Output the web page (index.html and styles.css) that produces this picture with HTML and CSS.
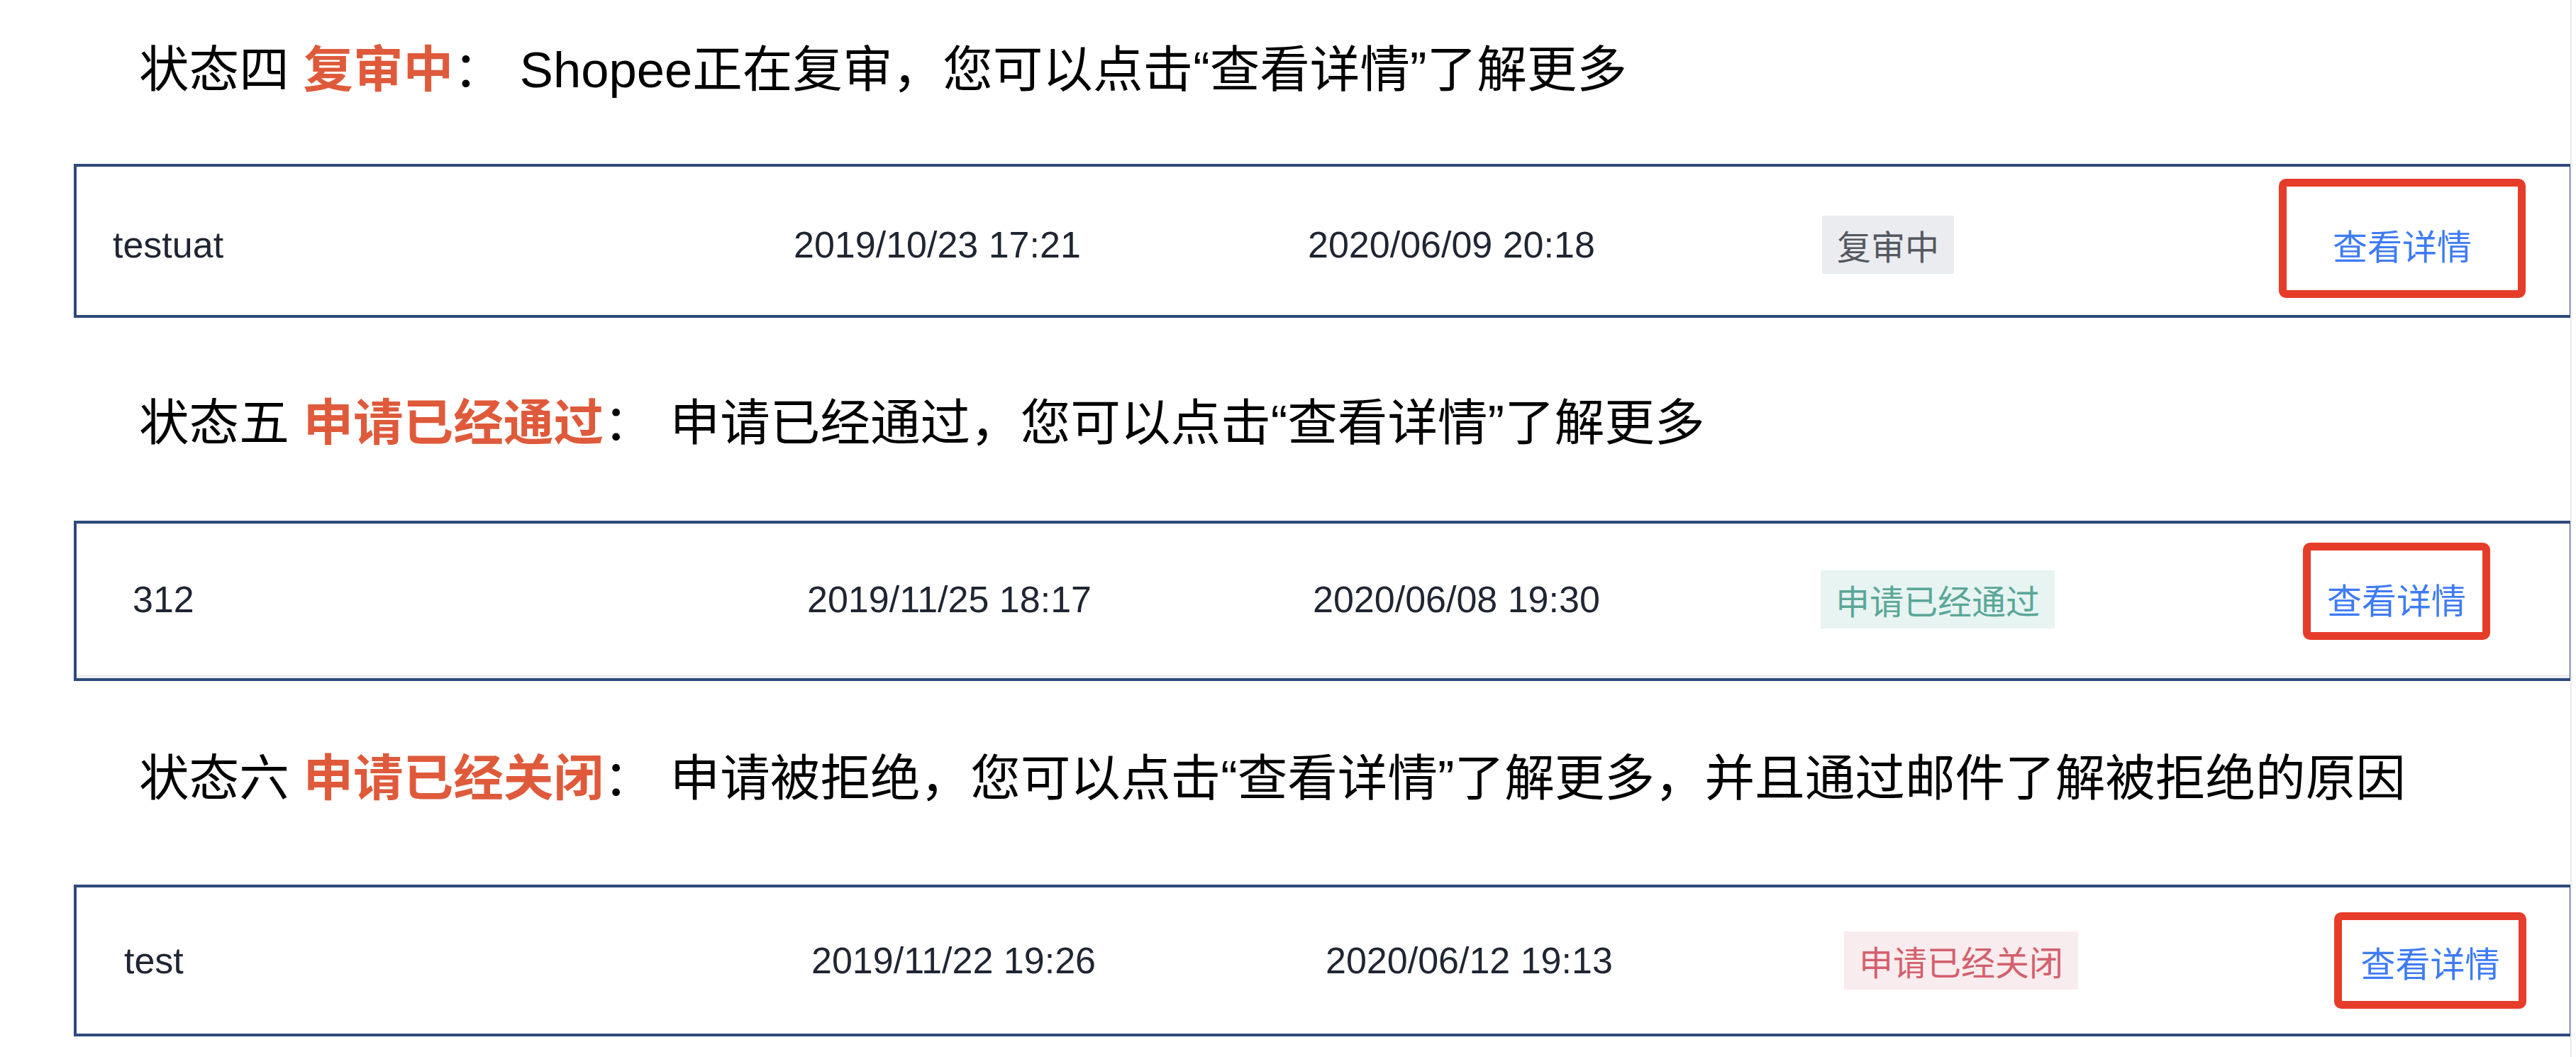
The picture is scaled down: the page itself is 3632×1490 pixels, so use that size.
FILE: index.html
```html
<!DOCTYPE html>
<html lang="zh-CN">
<head>
<meta charset="utf-8">
<title>申请状态说明</title>
<link rel="stylesheet" href="styles.css">
</head>
<body>
<div class="page">
  <section class="sec sec-review">
    <h2 class="heading"><span class="label">状态四</span> <strong class="state">复审中</strong><span class="colon">：</span><span class="desc">Shopee正在复审，您可以点击“查看详情”了解更多</span></h2>
    <div class="card card-review">
      <div class="row">
        <span class="cell name">testuat</span>
        <span class="cell date">2019/10/23 17:21</span>
        <span class="cell date">2020/06/09 20:18</span>
        <span class="cell"><span class="tag tag-info">复审中</span></span>
        <span class="cell"><a class="detail" href="#">查看详情</a></span>
      </div>
    </div>
  </section>

  <section class="sec sec-passed">
    <h2 class="heading"><span class="label">状态五</span> <strong class="state">申请已经通过</strong><span class="colon">：</span><span class="desc">申请已经通过，您可以点击“查看详情”了解更多</span></h2>
    <div class="card card-passed">
      <div class="row">
        <span class="cell name">312</span>
        <span class="cell date">2019/11/25 18:17</span>
        <span class="cell date">2020/06/08 19:30</span>
        <span class="cell"><span class="tag tag-success">申请已经通过</span></span>
        <span class="cell"><a class="detail" href="#">查看详情</a></span>
      </div>
    </div>
  </section>

  <section class="sec sec-closed">
    <h2 class="heading"><span class="label">状态六</span> <strong class="state">申请已经关闭</strong><span class="colon">：</span><span class="desc">申请被拒绝，您可以点击“查看详情”了解更多，并且通过邮件了解被拒绝的原因</span></h2>
    <div class="card card-closed">
      <div class="row">
        <span class="cell name">test</span>
        <span class="cell date">2019/11/22 19:26</span>
        <span class="cell date">2020/06/12 19:13</span>
        <span class="cell"><span class="tag tag-danger">申请已经关闭</span></span>
        <span class="cell"><a class="detail" href="#">查看详情</a></span>
      </div>
    </div>
  </section>
</div>
</body>
</html>
```

FILE: styles.css
```css
html, body {
  margin: 0;
  padding: 0;
  background: #ffffff;
}

body {
  font-family: "Liberation Sans", "Noto Sans CJK SC", sans-serif;
  color: #000000;
}

.page {
  box-sizing: border-box;
  width: 3626px;
  height: 1490px;
  padding-left: 104px;
  border-right: 2px solid #e9e9e9;
  overflow: hidden;
}

.sec {
  display: flex;
  flex-direction: column;
}

.heading {
  margin: 0 0 0 92px;
  height: 100px;
  font-size: 70.6px;
  line-height: 100px;
  font-weight: 400;
  white-space: nowrap;
  color: #000000;
}

.state {
  font-weight: 700;
  color: #df5a3b;
}

.desc {
  margin-left: 23px;
}

.sec-review .heading { margin-top: 49px; }
.sec-review .card { margin-top: 82px; height: 217px; }

.sec-passed .heading { margin-top: 99px; }
.sec-passed .card { margin-top: 87px; height: 226px; }

.sec-closed .heading { margin-top: 88px; }
.sec-closed .card { margin-top: 99px; height: 214px; }

.card {
  box-sizing: border-box;
  width: 3523px;
  border: 4px solid #2e4a7b;
  background: #ffffff;
}

.row {
  box-sizing: border-box;
  height: 100%;
  display: grid;
  align-items: center;
  font-size: 52px;
  color: #1f2532;
}

.card-review .row {
  padding-left: 51px;
  padding-top: 10px;
  grid-template-columns: 960px 725px 725px 644px auto;
}

.card-passed .row {
  padding-left: 79px;
  grid-template-columns: 951px 713px 716px 680px auto;
  border-top: 1px solid #dfe3ea;
  border-bottom: 5px solid #efefef;
}

.card-closed .row {
  padding-left: 67px;
  grid-template-columns: 969px 725px 731px 691px auto;
}

.cell {
  display: flex;
  align-items: center;
  white-space: nowrap;
}

.tag {
  display: inline-block;
  height: 82px;
  line-height: 82px;
  padding: 0 21px;
  font-family: "Noto Sans CJK SC", sans-serif;
  font-size: 48px;
}

.tag-info {
  background: #eaecef;
  color: #54585f;
}

.tag-success {
  background: #e7f4f2;
  color: #5aa797;
}

.tag-danger {
  background: #f9ecee;
  color: #d3606d;
}

.detail {
  box-sizing: border-box;
  display: flex;
  align-items: center;
  justify-content: center;
  border: 11px solid #e63c2a;
  border-radius: 10px;
  font-family: "Noto Sans CJK SC", sans-serif;
  font-size: 49px;
  line-height: 1;
  color: #3e7bf5;
  text-decoration: none;
}

.card-review .detail {
  width: 348px;
  height: 168px;
  padding-top: 16px;
  margin-bottom: 17px;
}

.card-passed .detail {
  width: 264px;
  height: 137px;
  padding-top: 19px;
  margin-bottom: 23px;
}

.card-closed .detail {
  width: 271px;
  height: 136px;
  padding-top: 3px;
}
```
